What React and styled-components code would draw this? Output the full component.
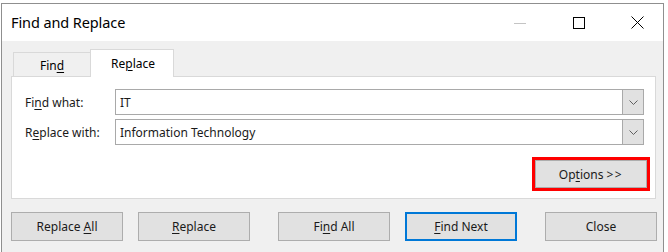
import React from "react";
import styled, { createGlobalStyle } from "styled-components";

const GlobalStyle = createGlobalStyle`
  html, body {
    margin: 0;
    padding: 0;
    background: #ffffff;
    overflow: hidden;
  }
  body {
    font-family: "Noto Sans", "Open Sans", sans-serif;
    color: #000;
  }
`;

const Screen = styled.div`
  width: 668px;
  height: 252px;
  padding: 3px 0 0 1px;
  box-sizing: border-box;
  background: #fff;
`;

const Window = styled.div`
  width: 663px;
  height: 260px;
  box-sizing: border-box;
  border: 1px solid #8f8f8f;
  border-bottom: none;
  background: #f0f0f0;
  display: flex;
  flex-direction: column;
  overflow: hidden;
`;

const TitleBar = styled.div`
  height: 37px;
  background: #fff;
  display: flex;
  align-items: center;
  padding-left: 9px;
`;

const Title = styled.div`
  flex: 1;
  font-size: 14.5px;
  letter-spacing: -0.1px;
  margin-top: -1px;
`;

const Captions = styled.div`
  display: flex;
  margin-right: -4px;
`;

const CaptionButton = styled.div`
  width: 59px;
  height: 37px;
  display: flex;
  align-items: center;
  justify-content: center;
  color: ${(p) => (p.$disabled ? "#c4c4c4" : "#000")};
`;

const Body = styled.div`
  padding: 9px 7px 0 9px;
  display: flex;
  flex-direction: column;
`;

const TabStrip = styled.div`
  display: flex;
  align-items: flex-end;
  padding-left: 2px;
  height: 27px;
  position: relative;
  z-index: 1;
  margin-bottom: -1px;
`;

const Tab = styled.div`
  box-sizing: border-box;
  height: ${(p) => (p.$active ? "28px" : "25px")};
  width: ${(p) => p.$w}px;
  display: flex;
  align-items: center;
  justify-content: center;
  font-size: 12px;
  background: ${(p) => (p.$active ? "#fff" : "#f0f0f0")};
  border: 1px solid #d9d9d9;
  border-bottom: ${(p) => (p.$active ? "none" : "1px solid #d9d9d9")};
  border-right: ${(p) => (p.$active ? "1px solid #d9d9d9" : "none")};
  padding-top: ${(p) => (p.$active ? "0" : "2px")};
  padding-left: ${(p) => (p.$active ? "2px" : "0")};
`;

const Panel = styled.div`
  box-sizing: border-box;
  width: 645px;
  background: #fff;
  border: 1px solid #d9d9d9;
  padding: 12px 11px 12px 13px;
  display: flex;
  flex-direction: column;
  gap: 4px;
`;

const FieldRow = styled.div`
  display: flex;
  align-items: center;
`;

const Label = styled.div`
  width: 90px;
  font-size: 12px;
  color: #1a1a1a;
`;

const Combo = styled.div`
  flex: 1;
  height: 26px;
  box-sizing: border-box;
  border: 1px solid #a9a9a9;
  display: flex;
  align-items: stretch;
`;

const ComboText = styled.div`
  flex: 1;
  font-size: 12px;
  display: flex;
  align-items: center;
  padding-left: 4px;
  color: #1a1a1a;
`;

const ComboArrow = styled.div`
  width: 20px;
  background: #e1e1e1;
  border-left: 1px solid #a9a9a9;
  display: flex;
  align-items: center;
  justify-content: center;
`;

const OptionsRow = styled.div`
  display: flex;
  justify-content: flex-end;
  margin-top: 11px;
  margin-bottom: -2px;
  margin-right: -3px;
`;

const Button = styled.button`
  box-sizing: border-box;
  width: ${(p) => p.$w || 112}px;
  height: ${(p) => p.$h || 29}px;
  background: #e1e1e1;
  border: ${(p) => (p.$default ? "2px solid #0078d7" : "1px solid #adadad")};
  font-family: inherit;
  font-size: 12px;
  color: #1a1a1a;
  padding: 0;
  outline: ${(p) => (p.$highlight ? "3px solid #ff0000" : "none")};
  outline-offset: 0;
  border-radius: 0;
`;

const Key = styled.span`
  text-decoration: underline;
  text-underline-offset: 2px;
  text-decoration-thickness: 1px;
`;

const Arrows = styled.span`
  letter-spacing: 1.5px;
  margin-left: 3px;
`;

const Footer = styled.div`
  display: flex;
  gap: 28px;
  margin-top: 13px;
`;

const ButtonGroup = styled.div`
  display: flex;
  gap: 15px;
`;

const Chevron = () => (
  <svg width="9" height="5" viewBox="0 0 9 5">
    <polyline points="0.5,0.5 4.5,4.5 8.5,0.5" fill="none" stroke="#606060" strokeWidth="1" />
  </svg>
);

export default function App() {
  return (
    <>
      <GlobalStyle />
      <Screen>
        <Window>
          <TitleBar>
            <Title>Find and Replace</Title>
            <Captions>
              <CaptionButton $disabled>
                <svg width="12" height="12" viewBox="0 0 12 12">
                  <line x1="0" y1="6.5" x2="12" y2="6.5" stroke="currentColor" strokeWidth="1" />
                </svg>
              </CaptionButton>
              <CaptionButton>
                <svg width="12" height="12" viewBox="0 0 12 12">
                  <rect x="0.5" y="0.5" width="11" height="11" fill="none" stroke="currentColor" strokeWidth="1" />
                </svg>
              </CaptionButton>
              <CaptionButton>
                <svg width="13" height="13" viewBox="0 0 13 13">
                  <path d="M0.5 0.5 L12.5 12.5 M12.5 0.5 L0.5 12.5" stroke="currentColor" strokeWidth="1" />
                </svg>
              </CaptionButton>
            </Captions>
          </TitleBar>
          <Body>
            <TabStrip>
              <Tab $w={77}>
                <span>
                  Fin<Key>d</Key>
                </span>
              </Tab>
              <Tab $w={84} $active>
                <span>
                  Re<Key>p</Key>lace
                </span>
              </Tab>
            </TabStrip>
            <Panel>
              <FieldRow>
                <Label>
                  Fi<Key>n</Key>d what:
                </Label>
                <Combo>
                  <ComboText>IT</ComboText>
                  <ComboArrow>
                    <Chevron />
                  </ComboArrow>
                </Combo>
              </FieldRow>
              <FieldRow>
                <Label>
                  R<Key>e</Key>place with:
                </Label>
                <Combo>
                  <ComboText>Information Technology</ComboText>
                  <ComboArrow>
                    <Chevron />
                  </ComboArrow>
                </Combo>
              </FieldRow>
              <OptionsRow>
                <Button $w={112} $h={28} $highlight>
                  Op<Key>t</Key>ions<Arrows>&gt;&gt;</Arrows>
                </Button>
              </OptionsRow>
            </Panel>
            <Footer>
              <ButtonGroup>
                <Button>
                  Replace <Key>A</Key>ll
                </Button>
                <Button>
                  <Key>R</Key>eplace
                </Button>
              </ButtonGroup>
              <ButtonGroup>
                <Button>
                  Fi<Key>n</Key>d All
                </Button>
                <Button $default>
                  <Key>F</Key>ind Next
                </Button>
              </ButtonGroup>
              <ButtonGroup>
                <Button>Close</Button>
              </ButtonGroup>
            </Footer>
          </Body>
        </Window>
      </Screen>
    </>
  );
}
